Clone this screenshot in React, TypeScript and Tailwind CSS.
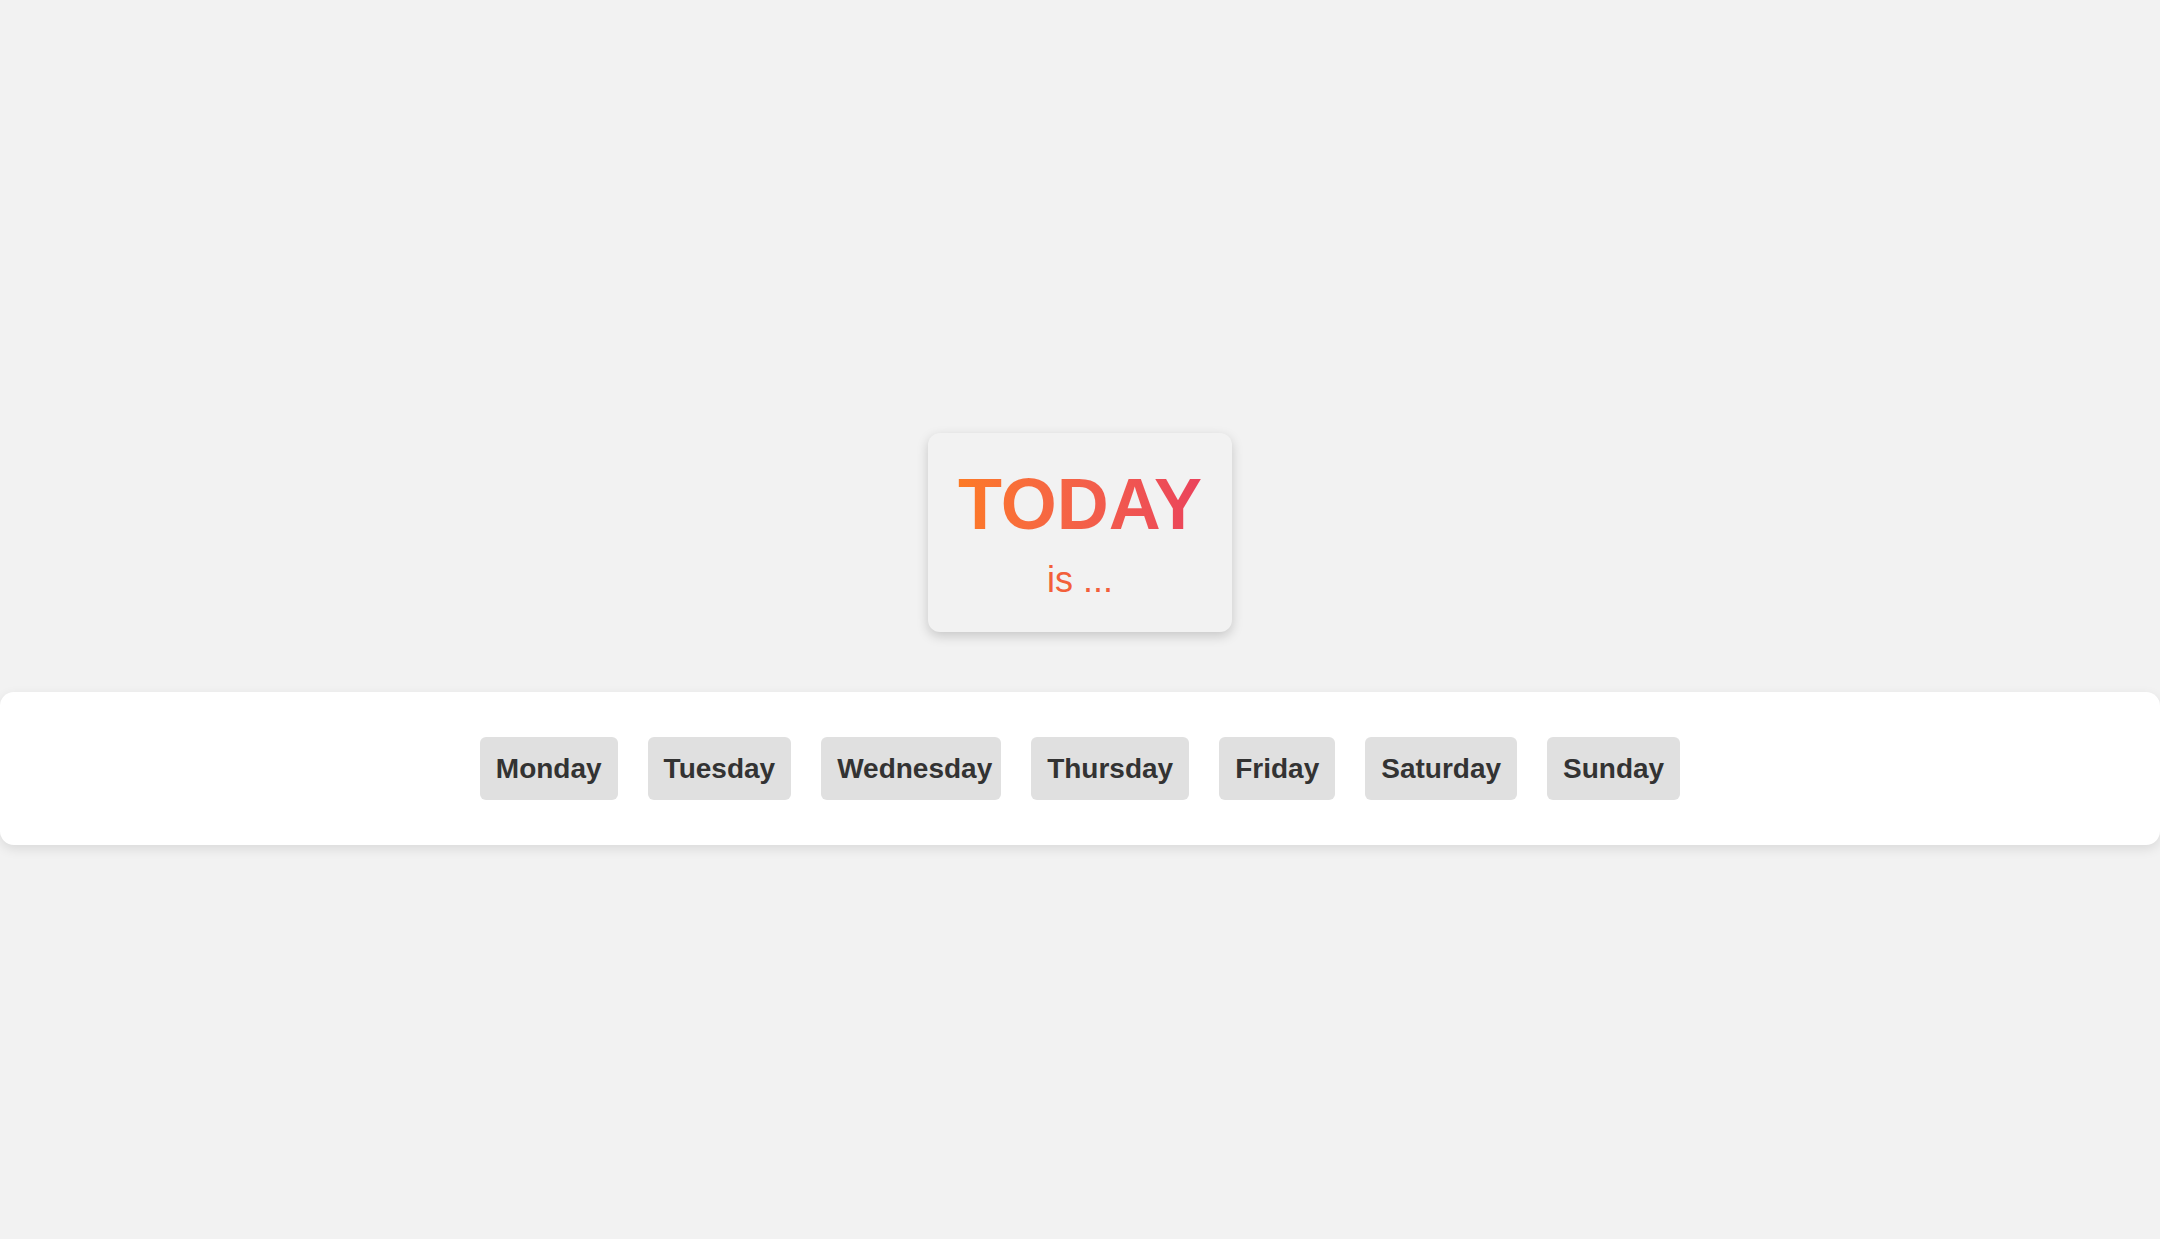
const DAYS = [
  { name: "Monday", width: "" },
  { name: "Tuesday", width: "" },
  { name: "Wednesday", width: "w-[180px]" },
  { name: "Thursday", width: "" },
  { name: "Friday", width: "" },
  { name: "Saturday", width: "" },
  { name: "Sunday", width: "" },
];

export default function App() {
  return (
    <main className="min-h-screen w-full bg-[#f2f2f2] pt-[433px] font-['Liberation_Sans',Arial,sans-serif]">
      <div className="flex justify-center">
        <div className="w-[304px] rounded-xl bg-[#f2f2f2] pt-[35px] pb-[34px] text-center shadow-[0_4px_12px_rgba(0,0,0,0.18)]">
          <h1 className="bg-gradient-to-r from-[#ff8010] to-[#e8395f] bg-clip-text text-[72px] leading-[72px] font-bold text-transparent">
            TODAY
          </h1>
          <p className="mt-[22px] text-[36px] leading-[36px] text-[#f35f3a]">
            is ...
          </p>
        </div>
      </div>

      <section className="mt-[60px] flex h-[153px] w-full items-center justify-center gap-[30px] rounded-[14px] bg-white shadow-[0_4px_12px_rgba(0,0,0,0.1)]">
        {DAYS.map((day) => (
          <button
            key={day.name}
            className={`h-[63px] rounded-md bg-[#e0e0e0] px-4 text-[28px] font-bold whitespace-nowrap text-[#333333] ${day.width}`}
          >
            {day.name}
          </button>
        ))}
      </section>
    </main>
  );
}
